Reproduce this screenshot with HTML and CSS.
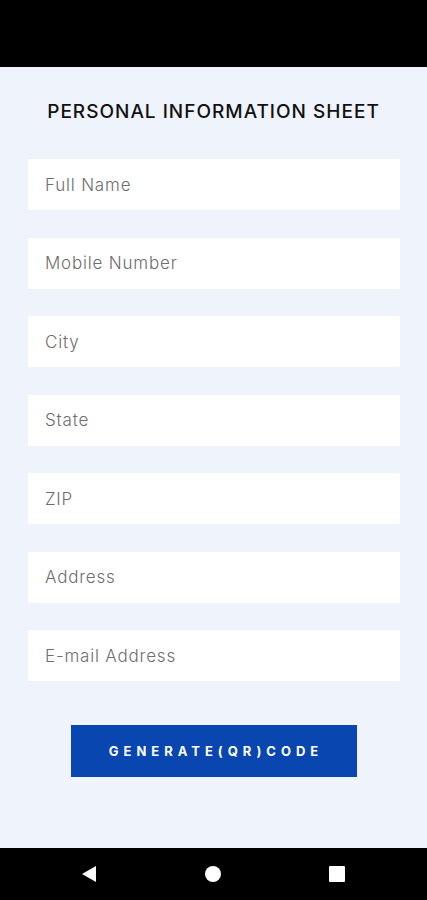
FILE: index.html
```html
<!DOCTYPE html>
<html lang="en">
<head>
<meta charset="utf-8">
<meta name="viewport" content="width=device-width, initial-scale=1">
<title>Personal Information Sheet</title>
<link rel="stylesheet" href="styles.css">
</head>
<body>
<div class="status-bar"></div>
<main class="screen">
  <h1 class="title">PERSONAL INFORMATION SHEET</h1>
  <form class="form">
    <input class="field" type="text" placeholder="Full Name">
    <input class="field" type="text" placeholder="Mobile Number">
    <input class="field" type="text" placeholder="City">
    <input class="field" type="text" placeholder="State">
    <input class="field" type="text" placeholder="ZIP">
    <input class="field" type="text" placeholder="Address">
    <input class="field" type="text" placeholder="E-mail Address">
  </form>
  <button class="generate" type="button">GENERATE(QR)CODE</button>
</main>
<nav class="nav-bar">
  <svg class="nav-icon" width="18" height="18" viewBox="0 0 18 18"><polygon points="16,1 16,17 2,9" fill="#fff"/></svg>
  <svg class="nav-icon" width="18" height="18" viewBox="0 0 18 18"><circle cx="9" cy="9" r="8" fill="#fff"/></svg>
  <svg class="nav-icon" width="18" height="18" viewBox="0 0 18 18"><rect x="1" y="1" width="16" height="16" rx="1" fill="#fff"/></svg>
</nav>
</body>
</html>
```
FILE: styles.css
```css
* { box-sizing: border-box; }
html, body { margin: 0; padding: 0; }
body {
  width: 427px;
  height: 900px;
  display: flex;
  flex-direction: column;
  font-family: "Inter", "Noto Sans", sans-serif;
  background: #000;
}
.status-bar {
  height: 67px;
  background: #000;
  flex: none;
}
.screen {
  flex: 1;
  background: #eff3fc;
  display: flex;
  flex-direction: column;
  align-items: center;
  padding-top: 33px;
}
.title {
  margin: 0;
  font-size: 19px;
  line-height: 24px;
  font-weight: 450;
  color: #111;
  letter-spacing: 1px;
}
.form {
  margin-top: 35px;
  width: 100%;
  padding: 0 27px 0 28px;
  display: flex;
  flex-direction: column;
  gap: 27.5px;
}
.field {
  display: block;
  width: 100%;
  height: 51px;
  border: none;
  background: #fff;
  padding: 0 17px;
  font-family: "Inter", "Noto Sans", sans-serif;
  font-size: 17px;
  font-weight: 300;
  letter-spacing: 0.8px;
  color: #333;
  outline: none;
}
.field::placeholder { color: #6e6e6e; }
.generate {
  margin-top: 44px;
  width: 286px;
  height: 52px;
  border: none;
  background: #0a46b0;
  color: #fff;
  font-family: "Inter", "Noto Sans", sans-serif;
  font-weight: 700;
  font-size: 13px;
  letter-spacing: 5px;
  padding: 0 0 0 5px;
}
.nav-bar {
  height: 52px;
  flex: none;
  background: #000;
  display: flex;
  align-items: center;
  justify-content: space-between;
  padding: 0 81px 0 80px;
}
.nav-icon { display: block; }
```
